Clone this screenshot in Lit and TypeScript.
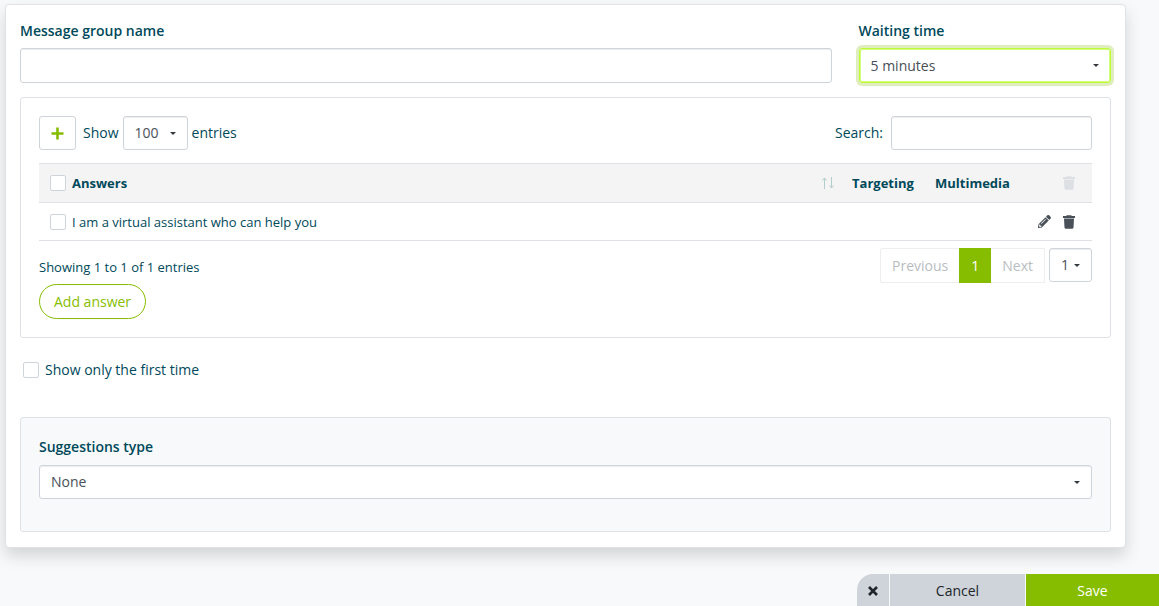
import { LitElement, html, css, svg } from "lit";
import { customElement, property, state } from "lit/decorators.js";

const trashIcon = html`<svg class="icon" viewBox="0 0 12 14" width="12" height="14" aria-hidden="true">
  <path fill="currentColor" d="M3.800 .3h4.400l.6 .8H12v1.900H0V1.100h3.200zM1 3.400h10l-.5 9.100c0 .7-.5 1.200-1.100 1.200H2.600c-.6 0-1.100-.5-1.100-1.200z" />
</svg>`;

const pencilIcon = html`<svg class="icon" viewBox="0 0 512 512" width="13" height="13" aria-hidden="true">
  <path
    fill="currentColor"
    d="M497.900 142.100l-46.100 46.100c-4.700 4.700-12.300 4.700-17 0l-111-111c-4.700-4.700-4.700-12.300 0-17l46.100-46.100c18.700-18.700 49.100-18.700 67.900 0l60.100 60.100c18.800 18.700 18.800 49.100 0 67.900zM284.200 99.800L21.600 362.400.4 483.900c-2.900 16.400 11.400 30.600 27.800 27.800l121.500-21.300 262.600-262.600c4.700-4.700 4.700-12.300 0-17l-111-111c-4.800-4.700-12.400-4.700-17.100 0zM124.100 339.900c-5.500-5.500-5.500-14.300 0-19.800l154-154c5.500-5.500 14.300-5.500 19.800 0s5.500 14.300 0 19.800l-154 154c-5.500 5.500-14.300 5.500-19.800 0zM88 424h48v36.300l-64.500 11.300-31.100-31.100L51.700 376H88v48z"
  />
</svg>`;

const sortIcon = html`<svg class="sort" viewBox="0 0 13 12" width="13" height="12" aria-hidden="true">
  <path class="sort-up" d="M2.500 12V1M.5 3.500L2.500 1l2 2.500" />
  <path class="sort-down" d="M9.500 0v11M7.500 8.500l2 2.500 2-2.500" />
</svg>`;

const caret = svg`<path fill="#343a40" d="M0 0h6L3 3z" />`;

@customElement("app-root")
export class AppRoot extends LitElement {
  @property({ type: Array }) answers: string[] = ["I am a virtual assistant who can help you"];
  @state() private waiting = "5 minutes";

  static styles = css`
    :host {
      display: block;
      min-height: 100vh;
      background: #f7f9fb;
      color: #00495a;
      font: 14px/20px "Open Sans", "Noto Sans", sans-serif;
    }
    *,
    *::before {
      box-sizing: border-box;
    }
    button,
    input,
    select {
      font: inherit;
      margin: 0;
    }
    button {
      cursor: pointer;
    }
    .page {
      display: flex;
      flex-direction: column;
      min-height: 100vh;
      overflow: hidden;
    }
    .card {
      margin: 4px 33px 26px 5px;
      padding: 16px 14px 15px;
      background: #fff;
      border: 1px solid #dfe2e6;
      border-radius: 4px;
      box-shadow: 0 8px 16px rgba(0, 0, 0, 0.15);
    }
    .fields {
      display: grid;
      grid-template-columns: repeat(12, minmax(0, 1fr));
      column-gap: 27px;
      margin-bottom: 14px;
    }
    .field {
      display: flex;
      flex-direction: column;
      gap: 7px;
    }
    .wide {
      grid-column: span 9;
    }
    .narrow {
      grid-column: span 3;
    }
    .caption {
      font-weight: 600;
    }
    .control {
      width: 100%;
      height: 34px;
      padding: 0 11px;
      background: #fff;
      border: 1px solid #ced4da;
      border-radius: 3px;
      color: #495057;
      box-shadow: inset 0 1px 1px rgba(0, 0, 0, 0.075);
      outline: none;
    }
    .fields .control {
      height: 35px;
    }
    select.control {
      appearance: none;
      cursor: pointer;
    }
    .select {
      display: grid;
      align-items: center;
    }
    .select > * {
      grid-area: 1 / 1;
    }
    .caret {
      justify-self: end;
      margin-right: 12px;
      pointer-events: none;
    }
    .active .control {
      border-color: #bffb3b;
      box-shadow: 0 0 0 3px rgba(133, 189, 0, 0.25), inset 0 0 0 1px #d4fd7c;
    }
    .panel {
      padding: 18px;
      border: 1px solid #dee2e6;
      border-radius: 3px;
    }
    .toolbar {
      display: flex;
      justify-content: space-between;
      gap: 16px;
      margin-bottom: 13px;
    }
    .group {
      display: flex;
      align-items: center;
    }
    .plus {
      display: grid;
      place-items: center;
      width: 37px;
      height: 34px;
      margin-right: 7px;
      padding: 0;
      background: #fff;
      border: 1px solid #ced4da;
      border-radius: 3px;
      color: #86bd00;
    }
    .length {
      display: flex;
      align-items: center;
      gap: 4px;
    }
    .length .select {
      width: 65px;
    }
    .length .caret {
      margin-right: 12px;
    }
    .search {
      gap: 8px;
    }
    .search .control {
      width: 201px;
    }
    .answers {
      width: 100%;
      table-layout: fixed;
      border-collapse: collapse;
      border-bottom: 1px solid #dee2e6;
      font-size: 13px;
    }
    .answers th,
    .answers td {
      padding: 0 10px;
      border-top: 1px solid #dee2e6;
      text-align: left;
    }
    .answers th:first-child,
    .answers td:first-child {
      padding: 0 7px 0 11px;
    }
    .answers th {
      height: 39px;
      background: #f4f4f4;
      font-weight: 700;
    }
    .answers td {
      height: 38px;
    }
    .targeting {
      width: 83px;
    }
    .multimedia {
      width: 95px;
    }
    .actions {
      width: 72px;
    }
    .cell {
      display: flex;
      align-items: center;
      justify-content: space-between;
    }
    .tick {
      display: flex;
      align-items: center;
      gap: 6px;
    }
    .box {
      appearance: none;
      width: 16px;
      height: 16px;
      flex: none;
      background: #fff;
      border: 1px solid #ced4da;
      border-radius: 2px;
    }
    .box:checked {
      background: #86bd00;
      border-color: #86bd00;
    }
    .tools {
      display: flex;
      justify-content: flex-end;
      gap: 12px;
      padding-right: 7px;
    }
    .tool {
      display: grid;
      place-items: center;
      padding: 0;
      border: 0;
      background: none;
      color: #495057;
    }
    .tool:disabled {
      color: #dcdfe3;
      cursor: default;
    }
    .icon,
    .sort,
    .caret,
    .glyph {
      display: block;
    }
    .sort path {
      fill: none;
      stroke: #b3cdcb;
      stroke-width: 1;
    }
    .summary {
      display: flex;
      justify-content: space-between;
      align-items: flex-start;
      padding-top: 7px;
    }
    .info {
      display: flex;
      flex-direction: column;
      align-items: flex-start;
      gap: 7px;
      padding-top: 9px;
      font-size: 13px;
    }
    .add {
      height: 35px;
      padding: 0 14px;
      background: #fff;
      border: 1px solid #86bd00;
      border-radius: 18px;
      color: #86bd00;
      font-size: 14px;
    }
    .pager {
      display: flex;
      align-items: flex-start;
      gap: 4px;
    }
    .pages {
      display: flex;
    }
    .page-link {
      height: 35px;
      padding: 0 11px;
      background: #fff;
      border: 1px solid #eceeef;
      color: #b9bdc1;
      cursor: default;
    }
    .page-link:first-child {
      border-right: 0;
      border-radius: 3px 0 0 3px;
    }
    .page-link:last-child {
      border-left: 0;
    }
    .current {
      width: 32px;
      background: #86bd00;
      border-color: #86bd00;
      color: #fff;
    }
    .pager .select {
      width: 43px;
    }
    .pager .caret {
      margin-right: 12px;
    }
    .once {
      display: flex;
      padding: 22px 3px 37px;
    }
    .shaded {
      padding: 19px 18px 32px;
      background: #f7f9fb;
    }
    .shaded .field {
      gap: 8px;
    }
    .footer {
      display: flex;
      justify-content: flex-end;
      gap: 1px;
      margin-top: auto;
    }
    .bar {
      height: 32px;
      padding: 1px 0 0;
      border: 0;
      background: #ced4da;
      color: #212529;
    }
    .close {
      display: grid;
      place-items: center;
      width: 32px;
      border-radius: 16px 0 0 0;
    }
    .cancel {
      width: 135px;
    }
    .save {
      width: 133px;
      background: #86bd00;
      color: #fff;
    }
  `;

  private renderSelect(id: string, options: string[], label = "") {
    return html`<span class="select">
      <select class="control" id=${id} aria-label=${label || id}>
        ${options.map((o) => html`<option>${o}</option>`)}
      </select>
      <svg class="caret" viewBox="0 0 6 3" width="6" height="3" aria-hidden="true">${caret}</svg>
    </span>`;
  }

  render() {
    return html`<div class="page">
      <main class="card">
        <div class="fields">
          <div class="field wide">
            <label class="caption" for="name">Message group name</label>
            <input class="control" id="name" type="text" />
          </div>
          <div class="field narrow active">
            <label class="caption" for="waiting">Waiting time</label>
            ${this.renderSelect("waiting", [this.waiting], "Waiting time")}
          </div>
        </div>

        <section class="panel">
          <div class="toolbar">
            <div class="group">
              <button class="plus" type="button" aria-label="Add">
                <svg class="glyph" viewBox="0 0 13 13" width="13" height="13" aria-hidden="true">
                  <path d="M6.500 .5v12M.5 6.500h12" fill="none" stroke="currentColor" stroke-width="2.600" />
                </svg>
              </button>
              <label class="length" for="length">
                <span>Show</span>
                ${this.renderSelect("length", ["100"], "Entries per page")}
                <span>entries</span>
              </label>
            </div>
            <div class="group search">
              <label for="search">Search:</label>
              <input class="control" id="search" type="search" />
            </div>
          </div>

          <table class="answers">
            <thead>
              <tr>
                <th>
                  <div class="cell">
                    <label class="tick"><input class="box" type="checkbox" />Answers</label>
                    ${sortIcon}
                  </div>
                </th>
                <th class="targeting">Targeting</th>
                <th class="multimedia">Multimedia</th>
                <th class="actions">
                  <div class="tools">
                    <button class="tool" type="button" aria-label="Delete selected" disabled>${trashIcon}</button>
                  </div>
                </th>
              </tr>
            </thead>
            <tbody>
              ${this.answers.map(
                (answer) => html`<tr>
                  <td>
                    <label class="tick"><input class="box" type="checkbox" />${answer}</label>
                  </td>
                  <td></td>
                  <td></td>
                  <td>
                    <div class="tools">
                      <button class="tool" type="button" aria-label="Edit">${pencilIcon}</button>
                      <button class="tool" type="button" aria-label="Delete">${trashIcon}</button>
                    </div>
                  </td>
                </tr>`
              )}
            </tbody>
          </table>

          <div class="summary">
            <div class="info">
              <span>Showing 1 to 1 of 1 entries</span>
              <button class="add" type="button">Add answer</button>
            </div>
            <div class="pager">
              <nav class="pages" aria-label="Pages">
                <button class="page-link" type="button" disabled>Previous</button>
                <button class="page-link current" type="button">1</button>
                <button class="page-link" type="button" disabled>Next</button>
              </nav>
              ${this.renderSelect("page", ["1"], "Page")}
            </div>
          </div>
        </section>

        <div class="once">
          <label class="tick"><input class="box" type="checkbox" />Show only the first time</label>
        </div>

        <section class="panel shaded">
          <div class="field">
            <label class="caption" for="suggestions">Suggestions type</label>
            ${this.renderSelect("suggestions", ["None"], "Suggestions type")}
          </div>
        </section>
      </main>

      <footer class="footer">
        <button class="bar close" type="button" aria-label="Close">
          <svg class="glyph" viewBox="0 0 10 10" width="10" height="10" aria-hidden="true">
            <path d="M1 1l8 8M9 1L1 9" fill="none" stroke="currentColor" stroke-width="2.600" />
          </svg>
        </button>
        <button class="bar cancel" type="button">Cancel</button>
        <button class="bar save" type="button">Save</button>
      </footer>
    </div>`;
  }
}
